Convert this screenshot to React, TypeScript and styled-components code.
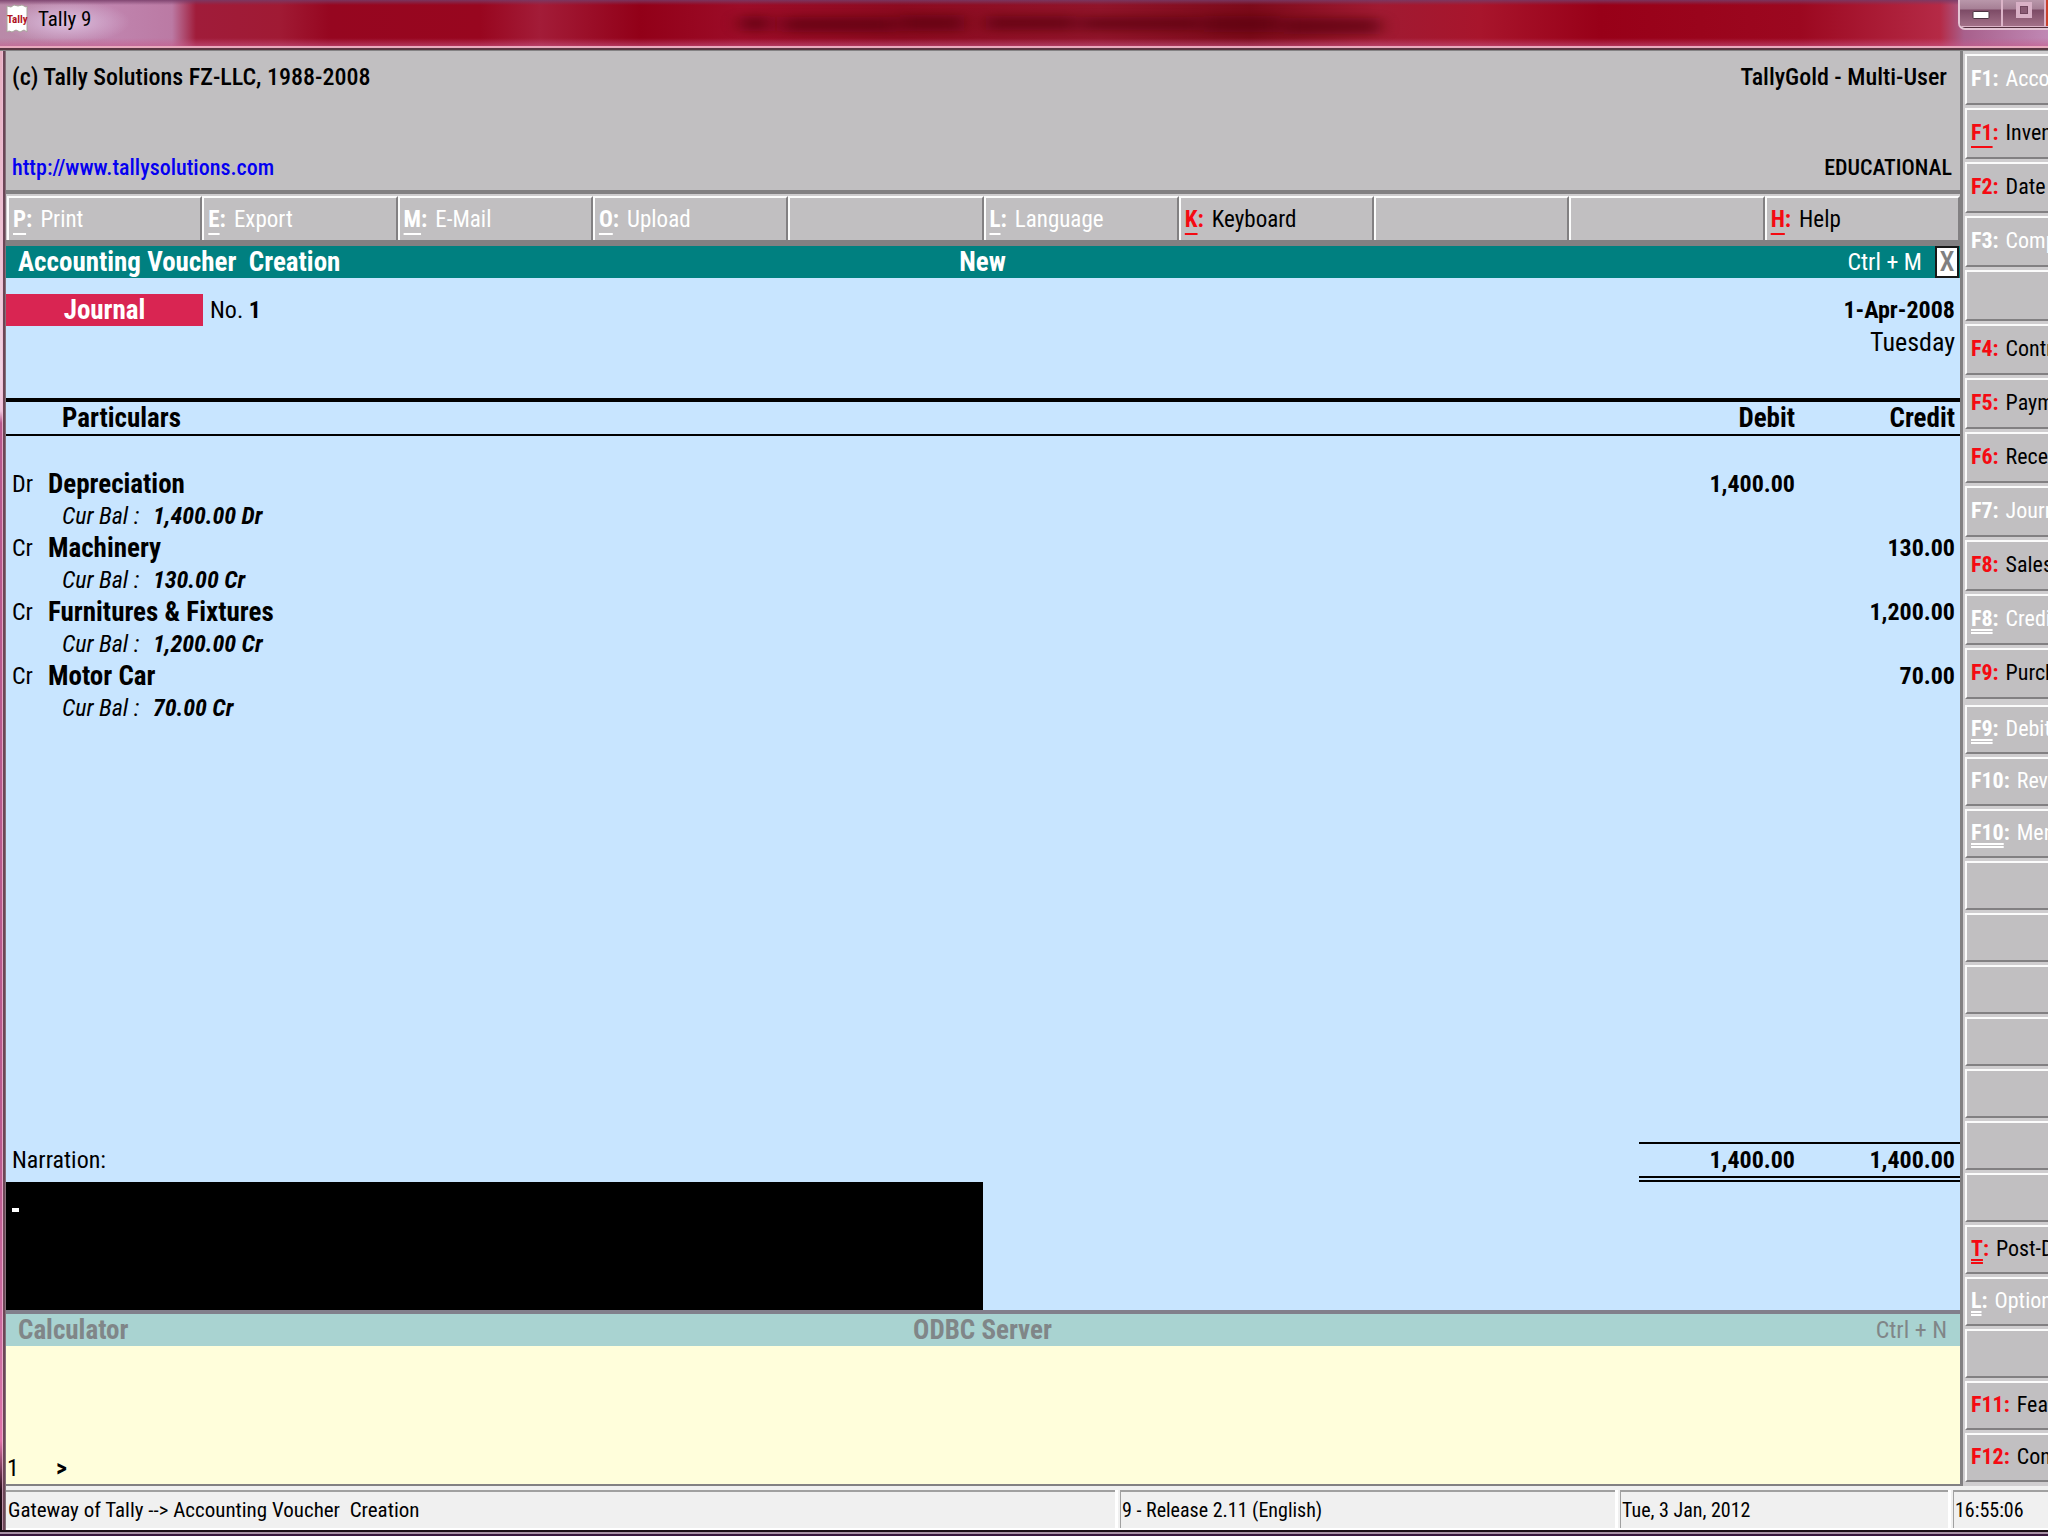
import React from "react";
import styled, { createGlobalStyle, css } from "styled-components";

const color = {
  face: "#c1bfc1",
  shade: "#828082",
  light: "#fbfbfb",
  teal: "#008080",
  sky: "#c8e5ff",
  cream: "#fffedb",
  red: "#f50a12",
};

const GlobalStyle = createGlobalStyle`
  * { box-sizing: border-box; }
  html, body { margin: 0; height: 100%; overflow: hidden; }
  body, button, input, textarea {
    font-family: "Roboto Condensed", "Liberation Sans Narrow", "Liberation Sans", sans-serif;
  }
  button { margin: 0; border-radius: 0; text-align: left; }
`;

/* ---------- window frame ---------- */

const Window = styled.div`
  display: flex;
  flex-direction: column;
  height: 100vh;
  overflow: hidden;
  background: ${color.face};
  color: #000;
`;

const TitleBar = styled.header`
  position: relative;
  display: flex;
  align-items: flex-start;
  flex: none;
  height: 46px;
  background:
    linear-gradient(to bottom, rgba(118, 60, 104, 0.85) 0, rgba(118, 60, 104, 0) 5px),
    linear-gradient(to top, rgba(200, 90, 140, 0.55) 0, rgba(200, 90, 140, 0) 8px),
    radial-gradient(ellipse 64px 22px at 66px 22px, #dcc0e0 0, rgba(220, 192, 224, 0) 100%),
    linear-gradient(to right, #b98aa8 0, #c084ae 110px, #bb7aa4 172px, #a01c3a 196px, #a01a34 280px,
      #960620 330px, #98061f 480px, #a31c38 540px, #920018 640px, #9c0c28 740px, #8c0a20 900px,
      #90142a 1100px, #7c0a1a 1250px, #a01a32 1380px, #a8152c 1480px, #980018 1600px, #9c0820 1800px,
      #b52a46 1940px, #a8608c 1964px, #c088b4 100%);
`;

const AppTitle = styled.h1`
  margin: 0 0 0 10px;
  font-size: 21px;
  font-weight: 400;
  line-height: 38px;
`;

const AppIcon = styled.svg`
  flex: none;
  width: 22px;
  height: 30px;
  margin: 4px 0 0 6px;
`;

const TitleGhost = styled.svg`
  position: absolute;
  inset: 8px auto auto 720px;
  width: 680px;
  height: 34px;
`;

const WindowControls = styled.div`
  display: flex;
  flex: none;
  width: 90px;
  height: 30px;
  margin-left: auto;
  overflow: hidden;
  border: solid #e4c4d4;
  border-width: 0 0 2px 2px;
  border-radius: 0 0 0 7px;
  background: #54303f;
`;

const ControlButton = styled.button<{ $close?: boolean }>`
  display: flex;
  align-items: flex-start;
  justify-content: center;
  flex: none;
  width: 43px;
  height: 27px;
  padding: 0;
  border: solid #dcb4c8;
  border-width: 0 2px 1px 0;
  background: ${(p) =>
    p.$close
      ? "#c8402c"
      : "linear-gradient(to bottom, #b997aa 0, #a67f95 9px, #7d4b66 10px, #a27088 100%)"};
`;

const Rim = styled.div`
  flex: none;
  height: 5px;
  background: linear-gradient(to bottom, #e9a9bd 0 2px, #5a3742 2px 4px, #858385 4px);
`;

const Body = styled.div`
  display: flex;
  flex: 1;
  min-height: 0;
`;

const LeftEdge = styled.div`
  flex: none;
  width: 6px;
  background:
    linear-gradient(to right, rgba(0, 0, 0, 0) 0 2px, rgba(240, 190, 215, 0.75) 2px 3px, #6b4656 3px 5px, #85707a 5px),
    linear-gradient(to bottom, #e6aec0 0, #f3d3e2 320px, #f0c4dc 360px, #b8588c 372px, #bb5a8e 1100px,
      #d070a4 1320px, #e070a8 1390px, #28101c 1440px, #180c14 100%);
`;

const BottomEdge = styled.div`
  flex: none;
  height: 6px;
  background: linear-gradient(to bottom, #1c1016 0 2px, #a992a6 2px 4px, #38183c 4px);
`;

const Client = styled.div`
  display: flex;
  flex-direction: column;
  flex: 1;
  min-width: 0;
`;

const Workspace = styled.div`
  display: flex;
  flex: 1;
  min-height: 0;
`;

const Main = styled.main`
  display: flex;
  flex-direction: column;
  flex: 1;
  min-width: 0;
`;

/* ---------- product header ---------- */

const ProductHeader = styled.section`
  display: flex;
  flex-direction: column;
  justify-content: space-between;
  flex: none;
  height: 139px;
  padding: 10px 0 6px;
  background: ${color.face};
`;

const HeaderRow = styled.div<{ $small?: boolean }>`
  display: flex;
  justify-content: space-between;
  padding: ${(p) => (p.$small ? "0 8px 0 6px" : "0 13px 0 6px")};
  font-size: ${(p) => (p.$small ? "22px" : "24px")};
  font-weight: 500;
  line-height: 32px;
`;

const SiteLink = styled.a`
  color: #0500f0;
  text-decoration: none;
`;

/* ---------- bevelled buttons ---------- */

const Toolbar = styled.nav`
  display: grid;
  grid-template-columns: repeat(10, 1fr);
  flex: none;
  border-top: 4px solid ${color.shade};
  border-bottom: 6px solid ${color.shade};
  padding: 2px 0 0 1px;
  background: #cfcdcf;
`;

const bevel = css`
  display: flex;
  align-items: center;
  min-width: 0;
  overflow: hidden;
  white-space: nowrap;
  border: solid ${color.light};
  background: ${color.face};
  color: #000;
  &:disabled { color: #fff; }
`;

const ToolButton = styled.button`
  ${bevel}
  gap: 8px;
  height: 44px;
  padding: 0 4px;
  border-width: 2px;
  border-right-color: ${color.shade};
  border-bottom: 0;
  font-size: 23px;
`;

const SideButton = styled.button<{ $tall?: boolean }>`
  ${bevel}
  flex: none;
  gap: 7px;
  height: ${(p) => (p.$tall ? "51px" : "49px")};
  padding: 0 0 2px 4px;
  border-width: 2px 0 2px 2px;
  border-bottom-color: ${color.shade};
  font-size: 22px;
`;

const Key = styled.b<{ $dim?: boolean }>`
  flex: none;
  color: ${(p) => (p.$dim ? "#fff" : color.red)};
`;

const KeyLetter = styled.span<{ $lines: number }>`
  text-decoration: ${(p) => (p.$lines === 0 ? "none" : p.$lines === 1 ? "underline" : "underline double")};
  text-decoration-thickness: 2px;
  text-decoration-skip-ink: none;
  text-underline-offset: ${(p) => (p.$lines === 1 ? "6px" : "3px")};
`;

const Sidebar = styled.nav`
  display: flex;
  flex-direction: column;
  flex: none;
  gap: 6px;
  width: 88px;
  overflow: hidden;
  padding: 3px 0 0 2px;
  border-left: 3px solid ${color.shade};
  background: #cfcdcf;
`;

const SideGroup = styled.div`
  display: flex;
  flex-direction: column;
  gap: 3px;
`;

/* ---------- panels ---------- */

const PanelBar = styled.header<{ $muted?: boolean }>`
  display: grid;
  grid-template-columns: 1fr auto 1fr;
  flex: none;
  padding: 0 13px 0 12px;
  background: ${(p) => (p.$muted ? "#a9d3d1" : color.teal)};
  color: ${(p) => (p.$muted ? "#808688" : "#fff")};
  line-height: 32px;
`;

const PanelTitle = styled.h2`
  margin: 0;
  font-size: 27px;
  font-weight: 700;
  line-height: 32px;
  white-space: pre;
`;

const Shortcut = styled.div`
  display: flex;
  justify-content: flex-end;
  gap: 13px;
  font-size: 24px;
`;

const CloseButton = styled.button`
  width: 24px;
  height: 32px;
  margin-right: -12px;
  padding: 0;
  border: 2px solid #181818;
  background: #fff;
  color: #808080;
  font-size: 27px;
  font-weight: 500;
  line-height: 28px;
  text-align: center;
`;

const Voucher = styled.section`
  display: flex;
  flex-direction: column;
  flex: 1;
  min-height: 0;
  background: ${color.sky};
`;

const VoucherHead = styled.div`
  display: flex;
  gap: 7px;
  padding: 16px 5px 40px 0;
  font-size: 24px;
  line-height: 32px;
`;

const VoucherType = styled.strong`
  width: 197px;
  height: 32px;
  background: #d92552;
  color: #fff;
  font-size: 27px;
  text-align: center;
`;

const VoucherDate = styled.div`
  margin-left: auto;
  text-align: right;
`;

const VoucherDay = styled.div`
  font-size: 26px;
`;

const EntryTable = styled.table`
  width: 100%;
  border-collapse: separate;
  border-spacing: 0;
  table-layout: fixed;
  font-size: 24px;
  line-height: 32px;
  tbody::before { content: ""; display: block; height: 32px; }
`;

const HeadCell = styled.th<{ $width?: number }>`
  width: ${(p) => (p.$width ? `${p.$width}px` : "auto")};
  padding: 0 0 0 ${(p) => (p.$width ? 0 : 56)}px;
  border: solid #000;
  border-width: 4px 0 2px;
  font-size: 27px;
  text-align: ${(p) => (p.$width ? "right" : "left")};
  &:last-child { padding-right: 5px; }
`;

const LedgerCell = styled.td`
  padding: 0 0 0 6px;
`;

const LedgerLine = styled.div`
  display: flex;
  strong { font-size: 27px; }
`;

const Side = styled.span`
  width: 36px;
`;

const BalanceLine = styled.div`
  display: flex;
  padding-left: 50px;
  font-style: italic;
`;

const BalanceLabel = styled.span`
  width: 91px;
`;

const Amount = styled.td`
  padding: 0;
  font-weight: 700;
  text-align: right;
  vertical-align: top;
  &:last-child { padding-right: 5px; }
`;

const VoucherFoot = styled.div`
  display: flex;
  justify-content: space-between;
  margin-top: auto;
  font-size: 24px;
  line-height: 32px;
`;

const NarrationLabel = styled.label`
  padding: 2px 0 0 6px;
`;

const Totals = styled.div`
  display: grid;
  grid-template-columns: 156px 165px;
  border-top: 2px solid #000;
  border-bottom: 6px double #000;
  font-weight: 700;
  text-align: right;
`;

const Total = styled.span`
  &:last-child { padding-right: 5px; }
`;

const NarrationBox = styled.div`
  position: relative;
  width: 50%;
  height: 128px;
`;

const NarrationInput = styled.textarea`
  display: block;
  width: 100%;
  height: 100%;
  padding: 10px 6px;
  border: 0;
  outline: 0;
  resize: none;
  background: #000;
  color: #fff;
  font-size: 24px;
`;

const Cursor = styled.span`
  position: absolute;
  top: 26px;
  left: 6px;
  width: 7px;
  height: 4px;
  background: #fff;
`;

const Calculator = styled.section`
  display: flex;
  flex-direction: column;
  flex: none;
  height: 176px;
  border-top: 4px solid #817f8b;
  border-bottom: 2px solid ${color.shade};
  background: ${color.cream};
`;

const PromptRow = styled.label`
  display: flex;
  margin-top: auto;
  padding-left: 1px;
  font-size: 24px;
  line-height: 32px;
`;

const PromptNumber = styled.span`
  width: 49px;
`;

const PromptInput = styled.input`
  flex: 1;
  min-width: 0;
  padding: 0 8px;
  border: 0;
  outline: 0;
  background: transparent;
  font-size: 24px;
`;

/* ---------- status bar ---------- */

const StatusBar = styled.footer`
  display: grid;
  grid-template-columns: 1fr 495px 328px 95px;
  gap: 5px;
  flex: none;
  padding-top: 4px;
  border-bottom: 2px solid #fff;
  background: #f0f0f0;
`;

const StatusPane = styled.div<{ $first?: boolean }>`
  height: 38px;
  padding-left: ${(p) => (p.$first ? 2 : 1)}px;
  border: solid #a0a0a0;
  border-width: 2px 0 0 ${(p) => (p.$first ? 0 : 1)}px;
  box-shadow: 3px 0 0 #fff;
  font-size: ${(p) => (p.$first ? 21 : 20)}px;
  line-height: 36px;
  white-space: pre;
`;

/* ---------- data ---------- */

type Action = { key: string; label: string; lines: number; off?: boolean } | null;

const act = (key: string, label: string, lines: number, off = false): Action => ({ key, label, lines, off });

const toolbar: Action[] = [
  act("P", "Print", 1, true),
  act("E", "Export", 1, true),
  act("M", "E-Mail", 1, true),
  act("O", "Upload", 1, true),
  null,
  act("L", "Language", 1, true),
  act("K", "Keyboard", 1),
  null,
  null,
  act("H", "Help", 1),
];

const voucherKeys: Action[] = [
  act("F1", "Accounting", 0, true),
  act("F1", "Inventory", 1),
  act("F2", "Date", 0),
  act("F3", "Company", 0, true),
  null,
  act("F4", "Contra", 0),
  act("F5", "Payment", 0),
  act("F6", "Receipt", 0),
  act("F7", "Journal", 0, true),
  act("F8", "Sales", 0),
  act("F8", "Credit", 2, true),
  act("F9", "Purchase", 0),
];

const optionKeys: Action[] = [
  act("F9", "Debit", 2, true),
  act("F10", "Rev", 0, true),
  act("F10", "Memos", 2, true),
  null,
  null,
  null,
  null,
  null,
  null,
  null,
  act("T", "Post-Dated", 2),
  act("L", "Optional", 2, true),
  null,
  act("F11", "Features", 0),
  act("F12", "Configure", 0),
];

const entries = [
  { side: "Dr", name: "Depreciation", balance: "1,400.00 Dr", debit: "1,400.00", credit: "" },
  { side: "Cr", name: "Machinery", balance: "130.00 Cr", debit: "", credit: "130.00" },
  { side: "Cr", name: "Furnitures & Fixtures", balance: "1,200.00 Cr", debit: "", credit: "1,200.00" },
  { side: "Cr", name: "Motor Car", balance: "70.00 Cr", debit: "", credit: "70.00" },
];

function ActionText({ action }: { action: NonNullable<Action> }) {
  return (
    <>
      <Key $dim={action.off}>
        <KeyLetter $lines={action.lines}>{action.key}</KeyLetter>:
      </Key>
      <span>{action.label}</span>
    </>
  );
}

function SideKeys({ items, tall }: { items: Action[]; tall?: boolean }) {
  return (
    <SideGroup>
      {items.map((a, i) =>
        a ? (
          <SideButton key={i} type="button" disabled={a.off} $tall={tall}>
            <ActionText action={a} />
          </SideButton>
        ) : (
          <SideButton key={i} as="div" $tall={tall} />
        ),
      )}
    </SideGroup>
  );
}

export default function App() {
  return (
    <Window>
      <GlobalStyle />
      <TitleBar>
        <TitleGhost viewBox="0 0 680 34" aria-hidden="true">
          <defs>
            <filter id="soft" x="-10%" y="-60%" width="120%" height="220%">
              <feGaussianBlur stdDeviation="9 4" />
            </filter>
          </defs>
          <g filter="url(#soft)" fill="#58000e" opacity="0.65">
            <rect x="20" y="8" width="30" height="15" />
            <rect x="62" y="9" width="114" height="15" />
            <rect x="180" y="7" width="64" height="16" />
            <rect x="266" y="8" width="90" height="14" />
            <rect x="362" y="9" width="118" height="13" />
            <rect x="484" y="8" width="76" height="16" />
            <rect x="564" y="10" width="96" height="16" />
          </g>
        </TitleGhost>
        <AppIcon viewBox="0 0 22 30" aria-hidden="true">
          <path d="M1 2l4 1 3-2 4 1 4-1 4 2 1-1v26l-3-2-4 2-4-2-4 2-3-1-2 1z" fill="#fff" stroke="#a8a49c" />
          <text x="1" y="19" fontSize="11" fontWeight="700" fill="#b01424">Tally</text>
        </AppIcon>
        <AppTitle>Tally 9</AppTitle>
        <WindowControls>
          <ControlButton type="button" aria-label="Minimize">
            <svg width="18" height="22" viewBox="0 0 18 22">
              <rect x="1" y="11.500" width="16" height="7" rx="1" fill="#fff" stroke="#4c3442" />
            </svg>
          </ControlButton>
          <ControlButton type="button" aria-label="Maximize">
            <svg width="18" height="20" viewBox="0 0 18 20">
              <rect x="3" y="4" width="12" height="12" fill="none" stroke="#d9b0c6" strokeWidth="4" />
              <rect x="5.500" y="6.500" width="7" height="7" fill="#8a5a74" stroke="#70445c" />
            </svg>
          </ControlButton>
          <ControlButton type="button" aria-label="Close" $close />
        </WindowControls>
      </TitleBar>
      <Rim />
      <Body>
        <LeftEdge />
        <Client>
          <Workspace>
            <Main>
              <ProductHeader>
                <HeaderRow>
                  <span>(c) Tally Solutions FZ-LLC, 1988-2008</span>
                  <span>TallyGold - Multi-User</span>
                </HeaderRow>
                <HeaderRow $small>
                  <SiteLink href="http://www.tallysolutions.com">http://www.tallysolutions.com</SiteLink>
                  <span>EDUCATIONAL</span>
                </HeaderRow>
              </ProductHeader>
              <Toolbar>
                {toolbar.map((a, i) =>
                  a ? (
                    <ToolButton key={i} type="button" disabled={a.off}>
                      <ActionText action={a} />
                    </ToolButton>
                  ) : (
                    <ToolButton key={i} as="div" />
                  ),
                )}
              </Toolbar>
              <PanelBar>
                <PanelTitle>{"Accounting Voucher  Creation"}</PanelTitle>
                <PanelTitle>New</PanelTitle>
                <Shortcut>
                  <span>Ctrl + M</span>
                  <CloseButton type="button">X</CloseButton>
                </Shortcut>
              </PanelBar>
              <Voucher>
                <VoucherHead>
                  <VoucherType>Journal</VoucherType>
                  <span>
                    No. <b>1</b>
                  </span>
                  <VoucherDate>
                    <strong>1-Apr-2008</strong>
                    <VoucherDay>Tuesday</VoucherDay>
                  </VoucherDate>
                </VoucherHead>
                <EntryTable>
                  <thead>
                    <tr>
                      <HeadCell>Particulars</HeadCell>
                      <HeadCell $width={156}>Debit</HeadCell>
                      <HeadCell $width={165}>Credit</HeadCell>
                    </tr>
                  </thead>
                  <tbody>
                    {entries.map((e) => (
                      <tr key={e.name}>
                        <LedgerCell>
                          <LedgerLine>
                            <Side>{e.side}</Side>
                            <strong>{e.name}</strong>
                          </LedgerLine>
                          <BalanceLine>
                            <BalanceLabel>Cur Bal :</BalanceLabel>
                            <b>{e.balance}</b>
                          </BalanceLine>
                        </LedgerCell>
                        <Amount>{e.debit}</Amount>
                        <Amount>{e.credit}</Amount>
                      </tr>
                    ))}
                  </tbody>
                </EntryTable>
                <VoucherFoot>
                  <NarrationLabel htmlFor="narration">Narration:</NarrationLabel>
                  <Totals>
                    <Total>1,400.00</Total>
                    <Total>1,400.00</Total>
                  </Totals>
                </VoucherFoot>
                <NarrationBox>
                  <NarrationInput id="narration" />
                  <Cursor />
                </NarrationBox>
              </Voucher>
              <Calculator>
                <PanelBar $muted>
                  <PanelTitle>Calculator</PanelTitle>
                  <PanelTitle>ODBC Server</PanelTitle>
                  <Shortcut>Ctrl + N</Shortcut>
                </PanelBar>
                <PromptRow>
                  <PromptNumber>1</PromptNumber>
                  <b>&gt;</b>
                  <PromptInput type="text" />
                </PromptRow>
              </Calculator>
            </Main>
            <Sidebar>
              <SideKeys items={voucherKeys} tall />
              <SideKeys items={optionKeys} />
            </Sidebar>
          </Workspace>
          <StatusBar>
            <StatusPane $first>{"Gateway of Tally --> Accounting Voucher  Creation"}</StatusPane>
            <StatusPane>9 - Release 2.11 (English)</StatusPane>
            <StatusPane>Tue, 3 Jan, 2012</StatusPane>
            <StatusPane>16:55:06</StatusPane>
          </StatusBar>
        </Client>
      </Body>
      <BottomEdge />
    </Window>
  );
}
